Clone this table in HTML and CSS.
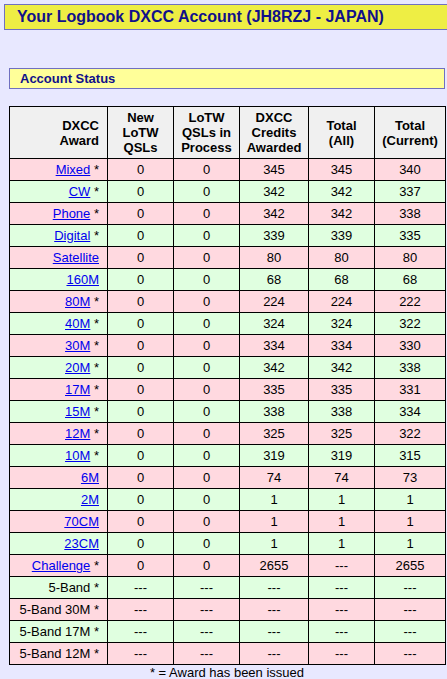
FILE: index.html
```html
<!DOCTYPE html>
<html>
<head>
<meta charset="utf-8">
<link rel="stylesheet" href="styles.css">
</head>
<body>
<div class="title-bar">Your Logbook DXCC Account (JH8RZJ - JAPAN)</div>
<div class="content">
<div class="section-bar">Account Status</div>
<table class="status">
<colgroup>
<col class="c1"><col class="c2"><col class="c3"><col class="c4"><col class="c5"><col class="c6">
</colgroup>
<thead>
<tr><th class="award-h">DXCC<br>Award</th><th>New<br>LoTW<br>QSLs</th><th>LoTW<br>QSLs in<br>Process</th><th>DXCC<br>Credits<br>Awarded</th><th>Total<br>(All)</th><th>Total<br>(Current)</th></tr>
</thead>
<tbody>
<tr class="pink"><td class="award"><a href="#">Mixed</a> *</td><td>0</td><td>0</td><td>345</td><td>345</td><td>340</td></tr>
<tr class="green"><td class="award"><a href="#">CW</a> *</td><td>0</td><td>0</td><td>342</td><td>342</td><td>337</td></tr>
<tr class="pink"><td class="award"><a href="#">Phone</a> *</td><td>0</td><td>0</td><td>342</td><td>342</td><td>338</td></tr>
<tr class="green"><td class="award"><a href="#">Digital</a> *</td><td>0</td><td>0</td><td>339</td><td>339</td><td>335</td></tr>
<tr class="pink"><td class="award"><a href="#">Satellite</a></td><td>0</td><td>0</td><td>80</td><td>80</td><td>80</td></tr>
<tr class="green"><td class="award"><a href="#">160M</a></td><td>0</td><td>0</td><td>68</td><td>68</td><td>68</td></tr>
<tr class="pink"><td class="award"><a href="#">80M</a> *</td><td>0</td><td>0</td><td>224</td><td>224</td><td>222</td></tr>
<tr class="green"><td class="award"><a href="#">40M</a> *</td><td>0</td><td>0</td><td>324</td><td>324</td><td>322</td></tr>
<tr class="pink"><td class="award"><a href="#">30M</a> *</td><td>0</td><td>0</td><td>334</td><td>334</td><td>330</td></tr>
<tr class="green"><td class="award"><a href="#">20M</a> *</td><td>0</td><td>0</td><td>342</td><td>342</td><td>338</td></tr>
<tr class="pink"><td class="award"><a href="#">17M</a> *</td><td>0</td><td>0</td><td>335</td><td>335</td><td>331</td></tr>
<tr class="green"><td class="award"><a href="#">15M</a> *</td><td>0</td><td>0</td><td>338</td><td>338</td><td>334</td></tr>
<tr class="pink"><td class="award"><a href="#">12M</a> *</td><td>0</td><td>0</td><td>325</td><td>325</td><td>322</td></tr>
<tr class="green"><td class="award"><a href="#">10M</a> *</td><td>0</td><td>0</td><td>319</td><td>319</td><td>315</td></tr>
<tr class="pink"><td class="award"><a href="#">6M</a></td><td>0</td><td>0</td><td>74</td><td>74</td><td>73</td></tr>
<tr class="green"><td class="award"><a href="#">2M</a></td><td>0</td><td>0</td><td>1</td><td>1</td><td>1</td></tr>
<tr class="pink"><td class="award"><a href="#">70CM</a></td><td>0</td><td>0</td><td>1</td><td>1</td><td>1</td></tr>
<tr class="green"><td class="award"><a href="#">23CM</a></td><td>0</td><td>0</td><td>1</td><td>1</td><td>1</td></tr>
<tr class="pink"><td class="award"><a href="#">Challenge</a> *</td><td>0</td><td>0</td><td>2655</td><td>---</td><td>2655</td></tr>
<tr class="green"><td class="award">5-Band *</td><td>---</td><td>---</td><td>---</td><td>---</td><td>---</td></tr>
<tr class="pink"><td class="award">5-Band 30M *</td><td>---</td><td>---</td><td>---</td><td>---</td><td>---</td></tr>
<tr class="green"><td class="award">5-Band 17M *</td><td>---</td><td>---</td><td>---</td><td>---</td><td>---</td></tr>
<tr class="pink"><td class="award">5-Band 12M *</td><td>---</td><td>---</td><td>---</td><td>---</td><td>---</td></tr>
</tbody>
</table>
<div class="note">* = Award has been issued</div>
</div>
</body>
</html>
```

FILE: styles.css
```css
html, body {
  margin: 0;
  padding: 0;
  background: #e8e8ff;
}
body {
  padding: 4px 0 0 4px;
  font-family: "Liberation Sans", Arial, sans-serif;
  overflow: hidden;
}
.title-bar {
  box-sizing: border-box;
  width: 460px;
  height: 26px;
  background: #eeee44;
  border: 1px solid #7070c0;
  color: #10108a;
  font-weight: bold;
  font-size: 16px;
  line-height: 24px;
  padding-left: 12px;
}
.content {
  padding-left: 5px;
  padding-top: 38px;
}
.section-bar {
  box-sizing: border-box;
  width: 436px;
  height: 21px;
  background: #ffff99;
  border: 1px solid #7070c0;
  color: #10108a;
  font-weight: bold;
  font-size: 13px;
  line-height: 19px;
  padding-left: 10px;
}
.status {
  margin-top: 17px;
  width: 436px;
  border-collapse: collapse;
  border: 1px solid #000;
  font-size: 13px;
  table-layout: fixed;
}
.c1 { width: 98px; }
.c2 { width: 66px; }
.c3 { width: 66px; }
.c4 { width: 69px; }
.c5 { width: 66px; }
.c6 { width: 71px; }
.status th, .status td {
  border: 1px solid #000;
  text-align: center;
  padding: 0 2px;
}
.status th {
  background: #f0f0f0;
  font-weight: bold;
  height: 51px;
  line-height: 15px;
}
.status th.award-h, .status td.award {
  text-align: right;
  padding-right: 8px;
}
.status td {
  height: 21px;
  line-height: 15px;
  color: #000;
}
.pink td { background: #ffd9e0; }
.green td { background: #e0ffe0; }
.status a {
  color: #0000ee;
  text-decoration: underline;
}
.note {
  width: 436px;
  text-align: center;
  font-size: 13px;
  line-height: 15px;
  color: #000;
}
```
